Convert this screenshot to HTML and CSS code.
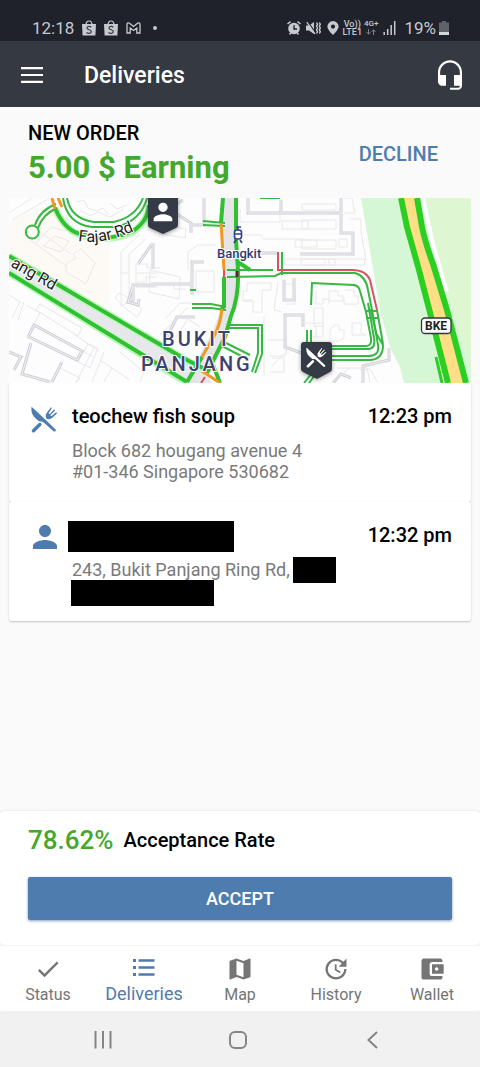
FILE: index.html
```html
<!DOCTYPE html>
<html lang="en">
<head>
<meta charset="utf-8">
<meta name="viewport" content="width=device-width, initial-scale=1">
<title>Deliveries</title>
<link rel="stylesheet" href="styles.css">
</head>
<body>
<svg class="defs" aria-hidden="true">
  <symbol id="cutlery" viewBox="0 0 27 27">
    <path d="M.6.8 14.800 14.100l9.800 9.300c.9 1.100-.8 2.800-2 1.900L13 16.800c-1.700-1.600-2.700-1.400-4.200-1.200C7.200 15 4.500 12.500 2.600 10.300.5 7.500 0 3.500.6.8Z" fill="currentColor"/>
    <path d="M2.500 24.700 8.800 18.500" fill="none" stroke="currentColor" stroke-width="3.400" stroke-linecap="round"/>
    <path d="M15.200 12.200C14.200 9.800 14.800 7.800 16.300 6L20 1.200l.9.8-3.300 5.300 1 1L23.200 3.300l1 1L19.300 9.300l1 .9 4.900-3.900.9.900-4.500 4.300c-1.900 1.600-4 1.900-5.600 1.500Z" fill="currentColor"/>
  </symbol>
  <symbol id="person" viewBox="0 0 24 24">
    <path fill="currentColor" d="M12 12c2.210 0 4-1.790 4-4s-1.790-4-4-4-4 1.790-4 4 1.790 4 4 4zm0 2c-2.670 0-8 1.340-8 4v2h16v-2c0-2.660-5.330-4-8-4z"/>
  </symbol>
  <symbol id="bag" viewBox="0 0 14 16">
    <path d="M4 5C4 2.500 5 1 7 1s3 1.500 3 4" fill="none" stroke="#c6c9ce" stroke-width="1.200"/>
    <path d="M0 4h14l-.6 11.500H.6Z" fill="#c6c9ce"/>
    <path d="M9.300 7.200C8 6 5 6 5 8c0 2.200 4.300 1.300 4.300 3.600 0 2-3.100 2.200-4.800.8" fill="none" stroke="#3a3e47" stroke-width="1.300"/>
  </symbol>
</svg>

<div class="screen">
  <div class="status">
    <div class="status-side">
      <span>12:18</span>
      <svg class="s-bag" aria-hidden="true"><use href="#bag"/></svg>
      <svg class="s-bag" aria-hidden="true"><use href="#bag"/></svg>
      <svg class="s-mail" viewBox="0 0 15 12" aria-hidden="true"><path d="M1 11V2.500C1 .8 2.600.5 3.500 1.300l4 3.200 4-3.200c.9-.8 2.500-.5 2.500 1.200V11h-3.200V6L7.500 8.500 4.200 6v5Z" fill="none" stroke="#c6c9ce" stroke-width="1.300"/></svg>
      <span class="s-dot"></span>
    </div>
    <div class="status-side">
      <svg class="s-alarm" viewBox="0 0 14 14" aria-hidden="true"><circle cx="7" cy="7.500" r="5.800" fill="#c6c9ce"/><path d="M.5 3 3.500.6M13.500 3 10.500.6M2.500 13.500l1.300-1.600M11.500 13.500l-1.300-1.600" stroke="#c6c9ce" stroke-width="1.500"/><path d="M7 4.200v3.800h3" fill="none" stroke="#1f222b" stroke-width="1.400"/></svg>
      <svg class="s-mute" viewBox="0 0 15 14" aria-hidden="true"><path d="M0 4.500h3L8 1v12L3 9.500H0Z" fill="#c6c9ce"/><path d="m1.800.6 8.300 12" stroke="#1f222b" stroke-width="1.200"/><path d="m.8 1.200 8.200 11.600" stroke="#c6c9ce" stroke-width="1.200"/><path d="m10.500 1.500 1 1.800-1 1.800 1 1.900-1 1.800 1 1.900-1 1.800M13.300 1.500l1 1.800-1 1.800 1 1.900-1 1.800 1 1.900-1 1.800" fill="none" stroke="#c6c9ce" stroke-width="1.400"/></svg>
      <svg class="s-pin" viewBox="0 0 12 14" aria-hidden="true"><path d="M6 0a5.600 5.600 0 0 1 5.600 5.600C11.600 9.300 6 14 6 14S.4 9.300.4 5.600A5.600 5.600 0 0 1 6 0Zm0 3.500a2.100 2.100 0 1 0 0 4.200 2.100 2.100 0 0 0 0-4.200Z" fill="#c6c9ce" fill-rule="evenodd"/></svg>
      <span class="s-stack"><span>Vo))</span><span>LTE1</span></span>
      <span class="s-stack s-net"><span>4G+</span>
        <svg class="s-arrows" viewBox="0 0 10 6" aria-hidden="true"><path d="M2.500 0v5M.5 3l2 2.300 2-2.300M7.500 6V1M5.500 3l2-2.300 2 2.300" fill="none" stroke="#7b7f87"/></svg>
      </span>
      <svg class="s-signal" viewBox="0 0 13 14" aria-hidden="true"><path d="M1.200 11v3M4.700 8v6M8.200 4v10M11.700 0v14" stroke="#c6c9ce" stroke-width="1.500"/></svg>
      <span class="s-batt-text">19%</span>
      <svg class="s-batt" viewBox="0 0 10 14" aria-hidden="true"><path d="M3 0h4v1.500h3V14H0V1.500h3Z" fill="#5f6269"/><path d="M0 11h10v3H0Z" fill="#d4d6d9"/></svg>
    </div>
  </div>

  <header class="appbar">
    <button class="icon-btn menu-btn" aria-label="Menu"><svg viewBox="0 0 22 16" aria-hidden="true"><path d="M0 1.200h22M0 8h22M0 14.800h22" stroke="#fff" stroke-width="2.200"/></svg></button>
    <h1 class="appbar-title">Deliveries</h1>
    <button class="icon-btn help-btn" aria-label="Support"><svg viewBox="0 0 24 24" aria-hidden="true"><path fill="#fff" d="M12 1c-4.970 0-9 4.030-9 9v7c0 1.660 1.340 3 3 3h3v-8H4.600v-2c0-4 3.300-7.400 7.400-7.400s7.400 3.400 7.400 7.400v2H15v8h4.400v.4c0 .7-.5 1.100-1.200 1.100H12V23h6c1.660 0 3-1.340 3-3V10c0-4.970-4.030-9-9-9z"/></svg></button>
  </header>

  <main class="content">
    <section class="order-head">
      <div>
        <h2 class="order-label">NEW ORDER</h2>
        <p class="earning">5.00 $ Earning</p>
      </div>
      <button class="decline">DECLINE</button>
    </section>

    <div class="order">
      <svg class="map" viewBox="9 198 462 185" role="img" aria-label="Route map">
        <defs>
          <path id="fajar" d="M78 241Q106 246 142 227"/>
          <path id="ring" d="M10 266 66 298"/>
          <g id="lanes">
            <path d="M28 337 34 325 82 351 77 360 27 336M31 343 22 374 50 382M9 352l12 5-7 13M62 362 52 382"/>
            <path d="M151 284h42M192 295V262h12M153 243v26M183 200l-14 9 22 14v10M204 198v27h-12M163 345l14-28h18M152 244l-14 20M133 302v-17h22M133 286l-5 16 10 3 1-6"/>
            <path d="M248 198v15h54M281 213v-13M284 280v20h10v-22M303 327v-12h-18v32l16 6M260 253h18M302 213h39v20h12v21h-53M341 198v16M389 348v12l-26 6v17M333 383l8-9 10 4"/>
          </g>
        </defs>
        <rect x="9" y="198" width="462" height="185" fill="#fdfdfd"/>
        <path d="M9 222 50 204 80 238 110 240V312L9 258Z" fill="#fdf9f5"/>
        <g class="m-building">
          <path d="M12 220 50 198M9 213 32 198M36 243l15-16 14 4 5-5-4-11M43 246l12-10 14 5-8 11ZM66 264l10-6-3-4 8-5 14 14-9 21-20-12ZM40 232l31 22M30 240l36 26"/>
          <path d="M76 202l8-2 4 8 8 3 7-3 5 6M80 210l10 6 8-4 12 5 14-8M110 203l7 6 10-4"/>
          <path d="M140 234 121 252v54l8-4v-48l17-15M121 273h8M115 298l10 10 12 9 5-8-15-12-8-4ZM136 263v24h22M137 273h21M137 264h10v4h13M137 282h9v-5h10"/>
          <path d="M9 295 20 302 12 318M24 302l-6 18M26 305l14 8-8 15M36 310l42 26 4-8-42-24ZM75 335l24 16M80 350l12 6M88 344l-10 18 12 6 8-20ZM94 348 76 382M104 352l-12 30M100 360l30 20M112 368l-8 14M120 352l24 20-4 10M60 368l20 10-4 5"/>
          <path d="M150 270l30 7-1 22-30-7ZM164 225l22 4-1 9-22-4ZM152 284h22v5h12M188 270v-18l10-7h18M196 271h18v21h-18ZM166 318l14-15h12M160 335l28-28M176 337l12-18 12 8"/>
          <path d="M243 235h18l2 4h42M240 208v14h40v-14M282 221h26v8h-26ZM295 240h22v7h-22ZM285 259h50v6h-50ZM247 283h24v7h-9v22h-9v-11h-10v-10h4ZM243 300h10M278 282l-4 28 8 2M283 284h12v20h-9M264 316v60M268 340h18v16h-16M272 358h12v14h-14M286 334v18l-14 14"/>
          <path d="M302 204h34v6h-34ZM302 220h34v9h-34ZM302 240h34v9h-34ZM339 239h8v8h-8ZM328 259h36l1 6h-35ZM301 259h24v6h-24ZM349 219h12v12l5 30M343 198l9 0 3 15h-11M316 290v14h7v-5h6v5M329 291h9v5h5v5h-14ZM345 290h9v6h4v8h-14v-6M314 308h9v18h-9ZM330 330l4-5h5v5h5v8l-5 3h-9ZM352 323h9v10l5 2h-14ZM316 326v13M305 323h18v14h-18M337 368h30l3 15M340 376l10-8M360 370l10-1 8 14"/>
        </g>
        <use href="#lanes" class="m-lane-edge"/>
        <use href="#lanes" class="m-lane-fill"/>
        <path d="M9 256 160 347 187 382 9 273Z" fill="#e7e7ec"/>
        <path d="M150 341 205 371 212 383H186L145 357Z" fill="#e7e7ec"/>
        <path d="M223 198h13l2 80-2 28-13 40-25 37h-13l28-52 9-25 1-40Z" fill="#e4e4e9"/>
        <path d="M361 198h110v185h-67l-4-16-10-20-10-36-9-54Z" fill="#d5f7d5"/>
        <path d="M424 198h47v172L445 285 432 232Z" fill="#dff6d2"/>
        <path d="M423 198 432 240 447 292" fill="none" stroke="#fff" stroke-width="4"/>
        <path d="M401 198 417 198 423 230 447 310 467 383H448L434 328 419 270 407 227Z" fill="#ffdf86"/>
        <g class="m-halo">
          <path d="M9 256 205 371M9 273 187 383"/>
          <path d="M55 208Q65 232 84 236 108 243 133 232 148 221 149 205"/>
        </g>
        <g class="m-main">
          <path d="M9 256 183 358 205 369M9 273 187 382"/>
          <path d="M55 208Q65 232 84 235 108 242 133 231 148 221 149 205"/>
          <path d="M223 198 221 223M224 277v28l-3 6M236 198 236 240 238 270Q239 297 231 316L225 337 207 373M202 357 187 382M238 262l12 8M213 365l7 18"/>
        </g>
        <g class="m-thin">
          <path d="M67 198Q71 219 94 222H114Q136 217 143 198M63 198Q67 224 92 227H116Q141 221 147 198"/>
          <path d="M56 204Q40 210 35 225M57 208Q43 214 38 228"/><circle cx="32.300" cy="232" r="6.500"/>
          <path d="M203 221 225 223M203 225 225 226M192 304 211 304 226 307M192 308 211 308 226 310M190 290h6"/>
          <path d="M227 270H273M227 277 275 276 281 273H355Q366 276 368 290L372 310 378 345Q380 356 368 356H332M282 252v23"/>
          <path d="M311 305 312 283 354 285Q359 286 360 291L366 312 371 338Q372 346 366 346H332M371 309 376 333 383 345Q383 360 369 360H332M365 311h12M366 318h13M332 349H369Q376 348 374 338L368 303M377 310 383 344"/>
          <path d="M227 325H262V354L255 373M229 328H258V353L252 372M222 341 250 355M222 346 247 359M307 330v16M311 330v16M304 383l8-10M309 383l6-8M260 198h20"/>
        </g>
        <g class="m-fast"><path d="M401 198 407 227 419 270 434 328 448 383"/><path d="M417 198 422 227Q425 242 433 264L447 310 466 383"/></g>
        <path d="M436 357 442 383" stroke="#2bcf22" stroke-width="3"/>
        <g class="m-orange"><path d="M52 198 55 209M58 198 62 207"/><path d="M221 223 224 270M222 309Q220 326 214 336L202 357M202 371 220 383"/></g>
        <g class="m-red"><path d="M224 270v7M205 377l-4 6M278 252v18H352Q366 270 370 280L377 310"/></g>
        <path d="M237 271v6" stroke="#5f2632" stroke-width="3"/>
        <g class="m-label m-street">
          <text><textPath href="#fajar">Fajar Rd</textPath></text>
          <text><textPath href="#ring">ang Rd</textPath></text>
        </g>
        <g fill="none" stroke="#33408c" stroke-width="1.600"><rect x="234.500" y="230" width="7" height="9" rx="2.500" fill="#fff"/><path d="M234.500 234h7M236 227h5M236 240l-2 3M240 240l2 3M238 227v3"/></g>
        <text class="m-label m-station" x="217" y="258">Bangkit</text>
        <g class="m-label m-town"><text x="162" y="346">BUKIT</text><text x="141" y="371">PANJANG</text></g>
        <rect x="421.500" y="318" width="29.500" height="15.500" rx="3.500" fill="#fff" stroke="#33363b" stroke-width="1.300"/>
        <text class="m-shield" x="436" y="330">BKE</text>
        <g class="m-marker">
          <path d="M148 192H178V225Q178 227 176 228L163 234 150 228Q148 227 148 225Z"/>
          <path d="M304 342H329Q332 342 332 345V369Q332 371 330 372L317 379 303 372Q301 371 301 369V345Q301 342 304 342Z"/>
        </g>
        <use href="#person" x="149" y="198" width="28" height="28" class="m-glyph"/>
        <use href="#cutlery" x="306" y="347" width="21" height="21" class="m-glyph"/>
      </svg>

      <article class="stop">
        <svg class="stop-icon stop-cutlery" aria-hidden="true"><use href="#cutlery"/></svg>
        <div class="stop-body">
          <div class="stop-row"><h3>teochew fish soup</h3><time>12:23 pm</time></div>
          <p class="address">Block 682 hougang avenue 4<br>#01-346 Singapore 530682</p>
        </div>
      </article>

      <article class="stop">
        <svg class="stop-icon stop-person" aria-hidden="true"><use href="#person"/></svg>
        <div class="stop-body">
          <div class="stop-row"><span class="mask mask-name"></span><time>12:32 pm</time></div>
          <p class="address address-masked"><span>243, Bukit Panjang Ring Rd,</span><span class="mask mask-unit"></span></p>
          <span class="mask mask-line"></span>
        </div>
      </article>
    </div>
  </main>

  <section class="accept">
    <p class="rate"><strong>78.62%</strong> <span>Acceptance Rate</span></p>
    <button class="accept-btn">ACCEPT</button>
  </section>

  <nav class="tabs">
    <a class="tab" href="#status"><svg viewBox="0 0 24 24" aria-hidden="true"><path d="M9 16.170 4.830 12l-1.420 1.410L9 19 21 7l-1.410-1.410z"/></svg><span>Status</span></a>
    <a class="tab tab-active" href="#deliveries" aria-current="page"><svg viewBox="0 0 28 28" aria-hidden="true"><path d="M3 5h3v3H3ZM3 12h3v3H3ZM3 19h3v3H3ZM8.500 5.300h16v2.400h-16ZM8.500 12.300h16v2.400h-16ZM8.500 19.300h16v2.400h-16Z"/></svg><span>Deliveries</span></a>
    <a class="tab" href="#map"><svg viewBox="0 0 24 24" aria-hidden="true"><path d="M20.500 3l-.16.03L15 5.100 9 3 3.360 4.900c-.21.07-.36.25-.36.48V20.500c0 .28.22.5.5.5l.16-.03L9 18.900l6 2.100 5.640-1.900c.21-.07.36-.25.36-.48V3.500c0-.28-.22-.5-.5-.5zM15 19l-6-2.110V5l6 2.110V19z"/></svg><span>Map</span></a>
    <a class="tab" href="#history"><svg viewBox="0 0 24 24" aria-hidden="true"><path d="M21 10.120h-6.780l2.740-2.820c-2.730-2.700-7.150-2.800-9.880-.1-2.730 2.710-2.730 7.080 0 9.790s7.150 2.710 9.880 0C18.320 15.650 19 14.080 19 12.100h2c0 1.980-.88 4.550-2.640 6.290-3.510 3.480-9.210 3.480-12.720 0-3.500-3.470-3.530-9.110-.02-12.580s9.140-3.470 12.650 0L21 3v7.120zM12.500 8v4.250l3.500 2.080-.72 1.210L11 13V8h1.500z"/></svg><span>History</span></a>
    <a class="tab" href="#wallet"><svg viewBox="0 0 24 24" aria-hidden="true"><path d="M21 18v1c0 1.100-.9 2-2 2H5c-1.110 0-2-.9-2-2V5c0-1.100.89-2 2-2h14c1.100 0 2 .9 2 2v1h-9c-1.110 0-2 .9-2 2v8c0 1.100.89 2 2 2h9zm-9-2h10V8H12v8zm4-2.500c-.83 0-1.500-.67-1.500-1.500s.67-1.500 1.500-1.500 1.500.67 1.500 1.500-.67 1.500-1.500 1.500z"/></svg><span>Wallet</span></a>
  </nav>

  <div class="system">
    <button class="icon-btn" aria-label="Recent apps"><svg viewBox="0 0 18 18" aria-hidden="true"><path d="M1.500 0v17.500M9 0v17.500M16.500 0v17.500"/></svg></button>
    <button class="icon-btn" aria-label="Home"><svg viewBox="0 0 18 18" aria-hidden="true"><rect x="1" y="1" width="16" height="16" rx="5"/></svg></button>
    <button class="icon-btn" aria-label="Back"><svg viewBox="0 0 18 18" aria-hidden="true"><path d="M13 1 4.500 9l8.500 8"/></svg></button>
  </div>
</div>
</body>
</html>
```
FILE: styles.css
```css
* { box-sizing: border-box; }
body { margin: 0; background: #fafafa; color: #000; font-family: Roboto, "Liberation Sans", sans-serif; }
h1, h2, h3, p { margin: 0; font-weight: 500; }
button { border: 0; background: none; padding: 0; font: inherit; color: inherit; }
svg { display: block; flex: none; }
.defs { position: absolute; width: 0; height: 0; }
.screen { display: flex; flex-direction: column; min-height: 100vh; }

.status { display: flex; justify-content: space-between; align-items: center; height: 41px; padding: 14px 31px 0 32px; background: #1f222b; color: #c6c9ce; font-size: 17px; }
.status-side { display: flex; align-items: center; }
.s-bag { width: 14px; height: 16px; margin-left: 8px; }
.s-mail { width: 15px; height: 12px; margin-left: 8px; }
.s-dot { width: 4px; height: 4px; margin-left: 12px; border-radius: 50%; background: #c6c9ce; }
.s-alarm { width: 14px; height: 14px; }
.s-mute { width: 15px; height: 14px; margin-left: 5px; }
.s-pin { width: 12px; height: 14px; margin-left: 6px; }
.s-stack { display: flex; flex-direction: column; align-items: center; height: 16px; margin-left: 4px; font-size: 9px; line-height: 8px; font-weight: 500; }
.s-net { margin-left: 2px; font-size: 8px; }
.s-arrows { width: 10px; height: 6px; margin-top: 1px; }
.s-signal { width: 13px; height: 14px; margin-left: 5px; }
.s-batt-text { margin-left: 8px; }
.s-batt { width: 10px; height: 14px; margin-left: 3px; }

.appbar { display: flex; align-items: center; height: 66px; padding: 2px 14px 0 20px; background: #353941; color: #fff; }
.icon-btn { display: grid; place-items: center; }
.menu-btn { width: 24px; height: 40px; }
.menu-btn svg { width: 22px; height: 16px; }
.appbar-title { flex: 1; margin-left: 40px; font-size: 23px; }
.help-btn svg { width: 32px; height: 32px; }

.content { flex: 1; padding: 0 9px 20px; }
.order-head { display: flex; justify-content: space-between; align-items: center; height: 91px; padding: 2px 33px 0 19px; }
.order-label { margin-top: 4px; font-size: 20px; line-height: 24px; }
.earning { font-size: 31px; line-height: 46px; font-weight: 700; color: #43a82b; }
.decline { font-size: 20px; font-weight: 500; color: #4f7cae; }

.map { width: 100%; height: auto; border-radius: 3px 3px 0 0; }
.stop { display: flex; min-height: 119px; padding: 17px 19px 14px 21px; background: #fff; border-radius: 3px; box-shadow: 0 1px 2px rgba(0, 0, 0, .22); }
.stop-icon { color: #4f7cae; }
.stop-cutlery { width: 27px; height: 27px; margin: 6px 14px 0 1px; }
.stop-person { width: 36px; height: 36px; margin: 0 9px 0 -3px; }
.stop-body { flex: 1; min-width: 0; }
.stop-row { display: flex; justify-content: space-between; align-items: center; height: 31px; font-size: 20px; font-weight: 500; }
.stop-row h3 { font-size: 20px; }
.address { margin-top: 9px; font-size: 18px; line-height: 21px; font-weight: 400; color: #7a7a7a; }
.address-masked { display: flex; align-items: center; height: 21px; }
.mask { display: block; height: 26px; background: #000; }
.mask-name { width: 166px; height: 31px; margin: 4px 0 0 -4px; }
.mask-unit { width: 43px; margin-left: 3px; }
.mask-line { width: 143px; margin-left: -1px; }

.m-building path { fill: none; stroke: #e8e8eb; stroke-width: 1; }
.m-lane-edge { fill: none; stroke: #cfcfd7; stroke-width: 3; }
.m-lane-fill { fill: none; stroke: #f1f1f5; stroke-width: 1; }
.m-halo path { fill: none; stroke: #b9f7b9; stroke-width: 7; }
.m-main path { fill: none; stroke: #31c031; stroke-width: 4; }
.m-thin path, .m-thin circle { fill: none; stroke: #37b743; stroke-width: 2; }
.m-fast path { fill: none; stroke: #2bcf22; stroke-width: 6; }
.m-orange path { fill: none; stroke: #ee9a22; stroke-width: 3; }
.m-red path { fill: none; stroke: #d9535d; stroke-width: 2; }
.m-label { paint-order: stroke; stroke: #fff; stroke-width: 2; }
.m-street { font-size: 16px; font-weight: 400; fill: #222; }
.m-station { font-size: 13px; font-weight: 500; fill: #33386b; }
.m-town { font-size: 20px; font-weight: 500; letter-spacing: 3px; fill: #3d4170; }
.m-shield { font-size: 12px; font-weight: 700; fill: #222; text-anchor: middle; }
.m-marker { fill: #343a46; filter: drop-shadow(0 1px 2px rgba(0, 0, 0, .4)); }
.m-glyph { color: #fff; }

.accept { padding: 11px 28px 25px; background: #fff; border-radius: 4px; box-shadow: 0 0 2px rgba(0, 0, 0, .16); }
.rate { display: flex; align-items: center; gap: 10px; height: 36px; font-size: 20px; }
.rate strong { font-size: 26px; font-weight: 500; color: #43a82b; }
.accept-btn { width: 100%; height: 43px; margin-top: 19px; border-radius: 2px; background: #4f7cae; color: #fff; font-size: 18px; font-weight: 500; box-shadow: 0 1px 3px rgba(50, 90, 150, .6); }

.tabs { display: grid; grid-template-columns: repeat(5, 1fr); height: 66px; background: #fff; border-top: 1px solid #f5f5f5; border-radius: 0 0 4px 4px; }
.tab { display: flex; flex-direction: column; align-items: center; padding-top: 9px; color: #757575; font-size: 16px; line-height: 20px; text-decoration: none; }
.tab svg { width: 28px; height: 28px; fill: currentColor; }
.tab span { margin-top: 2px; }
.tab-active { color: #4f7cae; font-size: 18px; padding-top: 8px; }

.system { display: grid; grid-template-columns: repeat(3, 1fr); height: 56px; padding: 2px 40px 0 36px; background: #f1f1f1; }
.system svg { width: 18px; height: 18px; fill: none; stroke: #858585; stroke-width: 2; }
```
